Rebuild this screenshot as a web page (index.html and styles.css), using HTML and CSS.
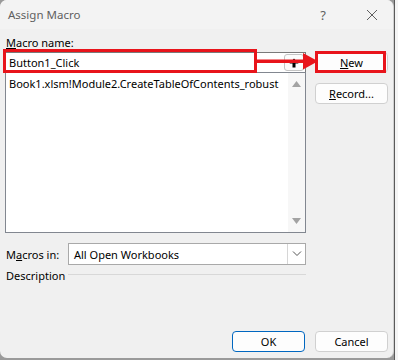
FILE: index.html
```html
<!DOCTYPE html>
<html lang="en">
<head>
  <meta charset="UTF-8">
  <title>Assign Macro</title>
  <link rel="stylesheet" href="styles.css">
</head>
<body>
  <div class="dialog">
    <div class="titlebar">
      <span class="title">Assign Macro</span>
      <span class="help">?</span>
      <svg class="close" width="12" height="12" viewBox="0 0 12 12">
        <path d="M1 1 L11 11 M11 1 L1 11" stroke="#5f5f5f" stroke-width="1" fill="none"/>
      </svg>
    </div>
    <div class="content">
      <div class="main">
        <div class="left">
          <div class="label"><u>M</u>acro name:</div>
          <div class="name-box">
            <span>Button1_Click</span>
            <div class="up-btn">
              <svg width="10" height="10" viewBox="0 0 10 10">
                <path d="M5 0.5 L9.5 5.5 L6.5 5.5 L6.5 9.5 L3.5 9.5 L3.5 5.5 L0.5 5.5 Z" fill="#000"/>
              </svg>
            </div>
          </div>
          <div class="listbox">
            <div class="items">
              <div class="item">Book1.xlsm!Module2.CreateTableOfContents_robust</div>
            </div>
            <div class="scrollbar">
              <svg width="11" height="8" viewBox="0 0 11 8"><path d="M5.5 1 L10 7 L1 7 Z" fill="#a3a3a3"/></svg>
              <svg width="11" height="8" viewBox="0 0 11 8"><path d="M1 1 L10 1 L5.5 7 Z" fill="#a3a3a3"/></svg>
            </div>
          </div>
          <div class="row macros-in">
            <span class="row-label">M<u>a</u>cros in:</span>
            <div class="combo">
              <span>All Open Workbooks</span>
              <div class="combo-btn">
                <svg width="10" height="6" viewBox="0 0 10 6"><path d="M1 0.5 L5 4.5 L9 0.5" stroke="#555" stroke-width="1" fill="none"/></svg>
              </div>
            </div>
          </div>
          <div class="row desc">
            <span class="row-label">Description</span>
            <div class="rule"></div>
          </div>
        </div>
        <div class="right">
          <button class="btn new-btn"><u>N</u>ew</button>
          <button class="btn"><u>R</u>ecord...</button>
        </div>
      </div>
      <div class="footer">
        <button class="btn ok">OK</button>
        <button class="btn">Cancel</button>
      </div>

      <!-- red annotation marks -->
      <div class="mark mark-name"></div>
      <div class="mark mark-new"></div>
      <svg class="arrow" width="66" height="20" viewBox="0 0 66 20">
        <path d="M0 8.5 L50 8.5 L50 12 L0 12 Z" fill="#e8141b"/>
        <path d="M49 2 L64 10.2 L49 18.5 Z" fill="#e8141b"/>
      </svg>
    </div>
  </div>
  <div class="sheet"></div>
</body>
</html>
```

FILE: styles.css
```css
html, body {
  margin: 0;
  padding: 0;
}
body {
  width: 398px;
  height: 360px;
  display: flex;
  background: #9a9a9a;
  font-family: 'Segoe UI', 'Noto Sans', sans-serif;
  font-size: 11px;
  color: #000;
  overflow: hidden;
}
.dialog {
  width: 393px;
  height: 358px;
  background: #f0f0f0;
  border-radius: 7px;
  border-right: 1px solid #d0d0d0;
  display: flex;
  flex-direction: column;
  overflow: hidden;
}
.sheet {
  flex: 1;
  background: #f4f4f4;
  border-left: 1px solid #5a5a5a;
}
.titlebar {
  height: 29px;
  background: #f3f3f3;
  display: flex;
  align-items: center;
  padding-left: 8px;
  color: #5f5f5f;
}
.title {
  flex: 1;
  font-size: 11.5px;
}
.help {
  font-size: 13px;
  margin-right: 40px;
}
.close {
  margin-right: 15px;
}
.content {
  position: relative;
  flex: 1;
  display: flex;
  flex-direction: column;
  padding: 7px 5px 6px 5px;
}
.main {
  display: flex;
  gap: 9px;
}
.left {
  width: 301px;
  display: flex;
  flex-direction: column;
}
.label {
  height: 16px;
  line-height: 14px;
  padding-left: 1px;
}
.name-box {
  height: 20px;
  box-sizing: border-box;
  background: #fff;
  border: 1px solid #7a7a7a;
  border-bottom: none;
  display: flex;
  align-items: center;
  padding-left: 3px;
}
.name-box span {
  flex: 1;
}
.up-btn {
  width: 20px;
  height: 17px;
  margin-right: 1px;
  box-sizing: border-box;
  border: 1px solid #c4c4c4;
  border-radius: 3px;
  background: #fcfcfc;
  display: flex;
  align-items: center;
  justify-content: center;
}
.listbox {
  height: 161px;
  box-sizing: border-box;
  background: #fff;
  border: 1px solid #828790;
  display: flex;
}
.items {
  flex: 1;
  padding: 3px 3px;
}
.item {
  line-height: 15px;
}
.scrollbar {
  width: 17px;
  background: #f7f7f7;
  display: flex;
  flex-direction: column;
  justify-content: space-between;
  align-items: center;
  padding: 7px 0 7px;
}
.row {
  display: flex;
  align-items: center;
}
.macros-in {
  margin-top: 10px;
  height: 22px;
}
.row-label {
  width: 62px;
  padding-left: 1px;
}
.combo {
  flex: 1;
  height: 22px;
  box-sizing: border-box;
  background: #fff;
  border: 1px solid #a9a9a9;
  display: flex;
  align-items: center;
  padding-left: 5px;
}
.combo span {
  flex: 1;
}
.combo-btn {
  width: 17px;
  height: 20px;
  border-left: 1px solid #d6d6d6;
  display: flex;
  align-items: center;
  justify-content: center;
}
.desc {
  margin-top: 1px;
  height: 18px;
}
.rule {
  flex: 1;
  height: 1px;
  background: #d8d8d8;
  margin-bottom: 2px;
}
.right {
  display: flex;
  flex-direction: column;
  gap: 10px;
  padding-top: 16px;
}
.btn {
  width: 73px;
  height: 21px;
  box-sizing: border-box;
  background: #fdfdfd;
  border: 1px solid #d0d0d0;
  border-radius: 4px;
  font-family: inherit;
  font-size: 11px;
  color: #000;
  padding: 0;
}
.footer {
  margin-top: auto;
  display: flex;
  justify-content: flex-end;
  gap: 10px;
}
.ok {
  border-color: #0067c0;
}
.mark {
  position: absolute;
  border: 3px solid #e8141b;
  box-sizing: border-box;
}
.mark-name {
  left: 3px;
  top: 20px;
  width: 254px;
  height: 24px;
}
.mark-new {
  left: 315px;
  top: 22px;
  width: 71px;
  height: 22px;
}
.arrow {
  position: absolute;
  left: 254px;
  top: 22px;
}
```
